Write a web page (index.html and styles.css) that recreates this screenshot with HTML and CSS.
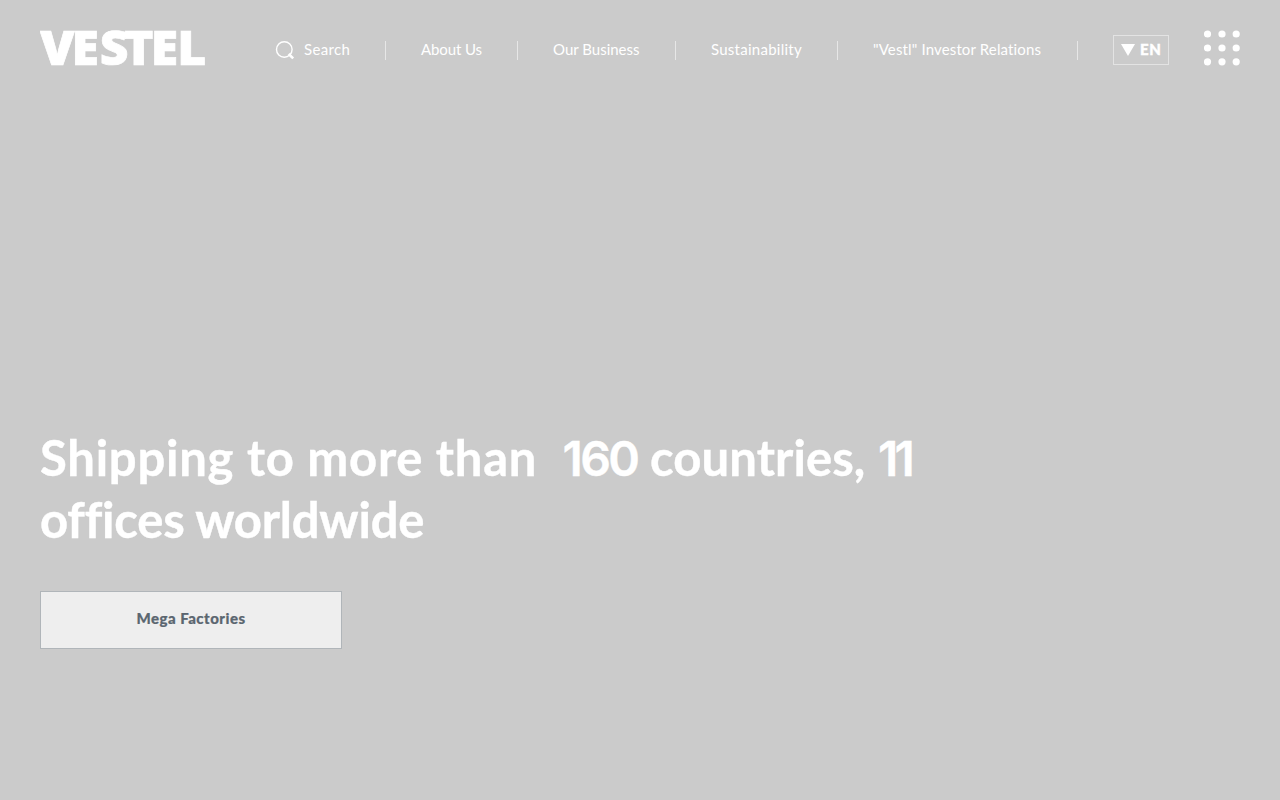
FILE: index.html
```html
<!DOCTYPE html>
<html lang="en">
<head>
<meta charset="utf-8">
<title>Vestel</title>
<link rel="stylesheet" href="styles.css">
</head>
<body>
<header class="header">
  <a class="logo" aria-label="Vestel">
    <svg width="180" height="70" viewBox="0 0 180 70"><text class="logo-text" transform="scale(1.04 1)" x="0 30.3 57.5 80.8 106.6 132" y="51.2">VESTEL</text></svg>
  </a>
  <nav class="nav">
    <a class="item search"><svg class="search-icon" width="20" height="20" viewBox="0 0 20 20"><circle cx="9.3" cy="8.5" r="7.8" fill="none" stroke="#fff" stroke-width="1.4"/><path d="M13.6 13L18.2 17.4" stroke="#fff" stroke-width="2.6"/></svg><span class="label">Search</span></a>
    <a class="item about"><span class="label">About Us</span></a>
    <a class="item business"><span class="label">Our Business</span></a>
    <a class="item sustain"><span class="label">Sustainability</span></a>
    <a class="item investor"><span class="label">"Vestl" Investor Relations</span></a>
  </nav>
  <a class="lang"><svg width="14" height="12" viewBox="0 0 14 12"><path d="M0 0H14L7 12Z" fill="#fff"/></svg><span class="lang-text">EN</span></a>
  <svg class="dots" width="36" height="36" viewBox="0 0 36 36" fill="#fff"><circle cx="3.5" cy="4" r="3.6"/><circle cx="18" cy="4" r="3.6"/><circle cx="32.2" cy="4" r="3.6"/><circle cx="3.5" cy="18" r="3.6"/><circle cx="18" cy="18" r="3.6"/><circle cx="32.2" cy="18" r="3.6"/><circle cx="3.5" cy="31.8" r="3.6"/><circle cx="18" cy="31.8" r="3.6"/><circle cx="32.2" cy="31.8" r="3.6"/></svg>
</header>
<main class="hero">
  <h1 class="title"><span class="line first">Shipping to more than &nbsp;<span class="num hundred">160</span> <span class="countries">countries,</span> <span class="num eleven">11</span></span><span class="line second">offices worldwide</span></h1>
  <a class="button"><span class="button-text">Mega Factories</span></a>
</main>
</body>
</html>
```
FILE: styles.css
```css
* { box-sizing: border-box; }
body {
  margin: 0;
  height: 800px;
  overflow: hidden;
  background: #cbcbcb;
  color: #fff;
  font-family: Lato, "Open Sans", sans-serif;
  font-variant-ligatures: none;
}
.header {
  display: flex;
  height: 100px;
  padding: 0 40px;
}
.logo { width: 180px; height: 70px; margin-top: 14px; }
.logo svg { display: block; }
.logo-text {
  font: 800 48px "Open Sans", sans-serif;
  fill: #fff;
  stroke: #fff;
  stroke-width: 0.7px;
}
.nav { display: flex; margin: 41px 0 0 55px; height: 19px; }
.item {
  display: flex;
  height: 19px;
  border-right: 1px solid #e7e7e7;
  padding-left: 35px;
  font-size: 15px;
  line-height: 16px;
  white-space: nowrap;
}
.search { width: 111px; padding-left: 0; letter-spacing: 0.35px; }
.search-icon { flex: none; margin-right: 9px; }
.about { width: 132px; letter-spacing: -0.1px; }
.business { width: 158px; }
.sustain { width: 162px; letter-spacing: 0.26px; }
.investor { width: 240px; letter-spacing: 0.14px; }
.lang {
  display: flex;
  width: 56px;
  height: 30px;
  margin: 35px 0 0 35px;
  padding: 8px 0 0 7px;
  border: 1px solid #e3e3e3;
}
.lang-text { margin-left: 5px; font-size: 15px; font-weight: 900; line-height: 11px; letter-spacing: 0.6px; -webkit-text-stroke: 0.4px #fff; }
.dots { margin: 30px 0 0 35px; }
.hero { padding: 326px 40px 0; }
.title { margin: 0; font-size: 49px; line-height: 62px; font-weight: 700; white-space: nowrap; -webkit-text-stroke: 0.4px #fff; }
.line { display: block; width: max-content; height: 62px; }
.first { letter-spacing: 0.75px; }
.second { letter-spacing: -0.22px; }
.num { font-family: Inter, sans-serif; font-weight: 600; font-size: 48px; line-height: 1; }
.hundred { letter-spacing: -2.6px; }
.countries { letter-spacing: 0.1px; }
.eleven { letter-spacing: -4px; }
.button {
  display: flex;
  justify-content: center;
  width: 302px;
  height: 58px;
  margin-top: 41px;
  border: 1px solid #b0b5b9;
  background: #eee;
  color: #5b6670;
  font-size: 15px;
  font-weight: 900;
  line-height: 53px;
  letter-spacing: 0.5px;
}
.button-text { -webkit-text-stroke: 0.2px #5b6670; }
```
